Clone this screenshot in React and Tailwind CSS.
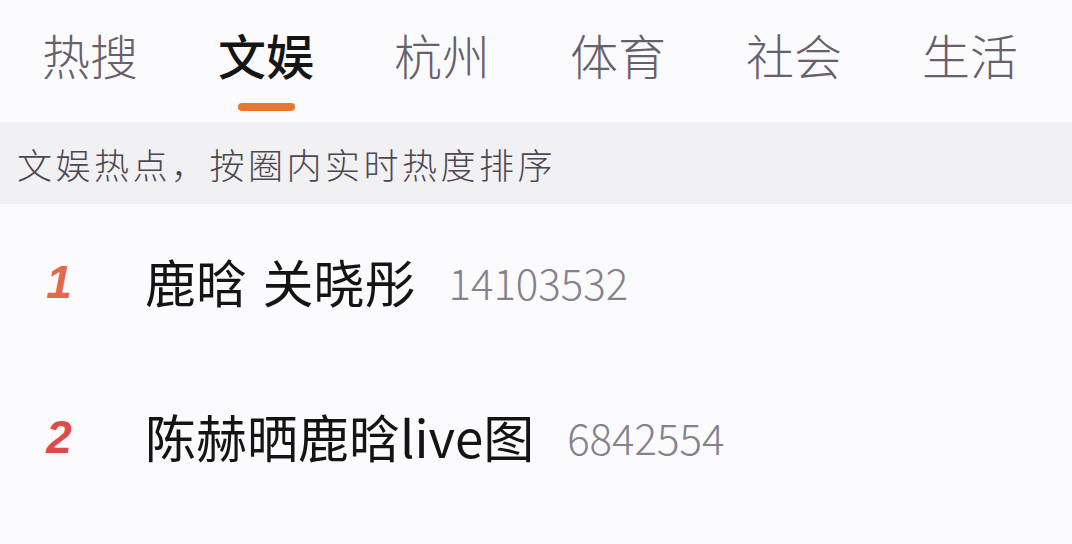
import React from 'react';

const tabs = ['热搜', '文娱', '杭州', '体育', '社会', '生活'];
const active = '文娱';

const rows = [
  { rank: 1, title: '鹿晗 关晓彤', heat: '14103532', color: 'text-[#e3694d]' },
  { rank: 2, title: '陈赫晒鹿晗live图', heat: '6842554', color: 'text-[#e04a4a]' },
];

export default function App() {
  return (
    <div
      className="w-[1072px] h-[544px] overflow-hidden bg-[#fbfbfd]"
      style={{ fontFamily: '"Noto Sans CJK SC", "Noto Sans", sans-serif' }}
    >
      {/* Tabs */}
      <div className="h-[122px] flex gap-[80px] pl-[42px] pt-[30px]">
        {tabs.map((t) => (
          <div key={t} className="flex flex-col items-center">
            <span
              className={`text-[48px] leading-none h-[48px] ${
                t === active ? 'text-[#151515] font-medium' : 'text-[#675f6c] font-light'
              }`}
            >
              {t}
            </span>
            {t === active && (
              <div className="mt-[25px] w-[57px] h-[8px] rounded-full bg-[#e8772d]" />
            )}
          </div>
        ))}
      </div>

      {/* Hint band */}
      <div className="h-[82px] bg-[#f1f1f3] flex items-center pl-[17px]">
        <span className="text-[35px] leading-none tracking-[3.5px] text-[#4c4652] font-light">
          文娱热点，按圈内实时热度排序
        </span>
      </div>

      {/* List */}
      <div>
        {rows.map((r) => (
          <div key={r.rank} className="h-[155px] flex items-center">
            <div className="w-[145px] pl-[32px] pr-[59px] flex justify-center">
              <span
                className={`text-[46px] leading-none font-bold italic ${r.color}`}
                style={{ fontFamily: '"Liberation Sans", sans-serif' }}
              >
                {r.rank}
              </span>
            </div>
            <span className="text-[51px] leading-none text-[#141414] [word-spacing:4px]">
              {r.title}
            </span>
            <span className="ml-[33px] text-[42px] leading-none text-[#86808b] font-light">
              {r.heat}
            </span>
          </div>
        ))}
      </div>
    </div>
  );
}
